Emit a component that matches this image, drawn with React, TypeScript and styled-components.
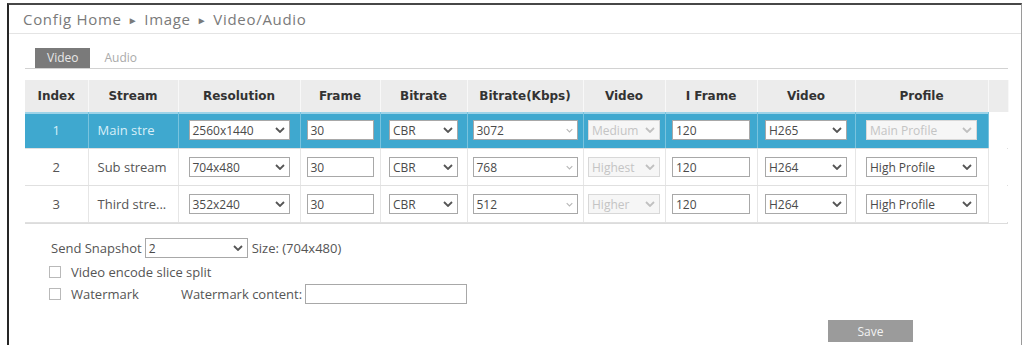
import styled, { createGlobalStyle } from "styled-components";

const GlobalStyle = createGlobalStyle`
  html, body {
    margin: 0;
    padding: 0;
    background: #fff;
  }
  body {
    font-family: "Open Sans", "Noto Sans", sans-serif;
    font-size: 13px;
    color: #555;
    overflow: hidden;
  }
`;

const Frame = styled.div`
  margin: 3px 0 0 7px;
  width: 1015px;
  height: 342px;
  overflow: hidden;
  box-sizing: border-box;
  border-top: 2px solid #474747;
  border-left: 2px solid #262626;
  border-right: 1px solid #9a9a9a;
`;

const Breadcrumb = styled.div`
  height: 28px;
  line-height: 28px;
  padding-left: 14px;
  border-bottom: 1px solid #e4e4e4;
  font-size: 15px;
  color: #7a7a7a;
  letter-spacing: 0.7px;
`;

const Arrow = styled.span`
  font-size: 10px;
  margin: 0 6px;
  position: relative;
  top: -1px;
`;

const Content = styled.div`
  padding: 0 13px 0 16px;
`;

const Tabs = styled.div`
  display: flex;
  align-items: flex-end;
  margin-top: 14px;
  height: 20px;
  border-bottom: 1px solid #d2d2d2;
`;

const Tab = styled.div<{ $active?: boolean }>`
  height: 20px;
  line-height: 20px;
  padding: 0 12px;
  margin-left: ${(p) => (p.$active ? "10px" : "2px")};
  font-size: 12px;
  background: ${(p) => (p.$active ? "#7a7a7a" : "transparent")};
  color: ${(p) => (p.$active ? "#e8e8e8" : "#aaa")};
`;

const TableWrap = styled.div`
  margin-top: 11px;
  border-right: 1px solid #dedede;
  border-bottom: 1px solid #dcdcdc;
`;

const Table = styled.table`
  width: 100%;
  table-layout: fixed;
  border-collapse: collapse;
`;

const Th = styled.th`
  height: 32px;
  padding: 0;
  background: #ececec;
  border-right: 1px solid #f8f8f8;
  font-family: "DejaVu Sans", "Liberation Sans", sans-serif;
  font-size: 12px;
  font-weight: bold;
  color: #333;
  text-align: center;
`;

const Row = styled.tr<{ $selected?: boolean }>`
  background: ${(p) => (p.$selected ? "#3fa8cf" : "#fff")};
  color: ${(p) => (p.$selected ? "#d8eff8" : "#555")};
  box-shadow: ${(p) => (p.$selected ? "inset 0 2px 0 #9dd3e8" : "none")};
`;

const Td = styled.td<{ $selected?: boolean; $left?: boolean; $gutter?: boolean }>`
  height: 36px;
  padding: ${(p) => (p.$left ? "0 0 0 9px" : "0")};
  text-align: ${(p) => (p.$left ? "left" : "center")};
  white-space: nowrap;
  overflow: hidden;
  border-right: 1px solid ${(p) => (p.$gutter ? "transparent" : p.$selected ? "#79c3de" : "#e6e6e6")};
  border-bottom: 1px solid ${(p) => (p.$gutter ? "transparent" : "#e0e0e0")};
  background: ${(p) => (p.$gutter ? "#fff" : "transparent")};
  font-size: 13px;
`;

const Field = styled.div<{ $w: number; $disabled?: boolean }>`
  display: inline-flex;
  align-items: center;
  justify-content: space-between;
  box-sizing: border-box;
  width: ${(p) => p.$w}px;
  height: 20px;
  padding: 0 4px 0 3px;
  vertical-align: middle;
  background: ${(p) => (p.$disabled ? "#f6f6f6" : "#fff")};
  border: 1px solid ${(p) => (p.$disabled ? "#d8d8d8" : "#a8a8a8")};
  color: ${(p) => (p.$disabled ? "#c4c4c4" : "#4a4a4a")};
  font-size: 12px;
  text-align: left;
  overflow: hidden;
  white-space: nowrap;
`;

const Chevron = ({ color = "#555", small = false }: { color?: string; small?: boolean }) => (
  <svg width={small ? 7 : 10} height={small ? 5 : 6} viewBox="0 0 10 6" style={{ flexShrink: 0 }}>
    <path d="M1 1 L5 5 L9 1" fill="none" stroke={color} strokeWidth={small ? 1.6 : 1.8} />
  </svg>
);

type SelectProps = { w: number; value: string; disabled?: boolean; combo?: boolean };

const Select = ({ w, value, disabled, combo }: SelectProps) => (
  <Field $w={w} $disabled={disabled}>
    <span>{value}</span>
    {combo ? (
      <Chevron color="#b8b8b8" small />
    ) : (
      <Chevron color={disabled ? "#c0c0c0" : "#555"} />
    )}
  </Field>
);

const TextInput = ({ w, value }: { w: number; value: string }) => (
  <Field $w={w}>
    <span>{value}</span>
  </Field>
);

const Options = styled.div`
  padding: 14px 0 0 24px;
`;

const OptionRow = styled.div<{ $mt?: number }>`
  display: flex;
  align-items: center;
  height: 20px;
  margin-top: ${(p) => p.$mt ?? 0}px;
  font-size: 13px;
  color: #555;
`;

const Label = styled.span<{ $ml?: number; $mr?: number }>`
  margin-left: ${(p) => p.$ml ?? 0}px;
  margin-right: ${(p) => p.$mr ?? 0}px;
`;

const Check = styled.span`
  width: 10px;
  height: 10px;
  border: 1px solid #b9b9b9;
  background: #fff;
  margin-right: 10px;
`;

const SaveBar = styled.div`
  display: flex;
  justify-content: flex-end;
  padding-right: 95px;
  margin-top: 16px;
`;

const SaveButton = styled.button`
  width: 85px;
  height: 22px;
  border: none;
  background: #9b9b9b;
  color: #f2f2f2;
  font-family: "Open Sans", sans-serif;
  font-size: 12px;
  padding: 0;
`;

const columns = [63, 90, 122, 80, 87, 116, 82, 92, 98, 133, 20];
const headers = [
  "Index",
  "Stream",
  "Resolution",
  "Frame",
  "Bitrate",
  "Bitrate(Kbps)",
  "Video",
  "I Frame",
  "Video",
  "Profile",
  "",
];

const streams = [
  { idx: "1", name: "Main stre", res: "2560x1440", kbps: "3072", quality: "Medium", codec: "H265", profile: "Main Profile", profileOff: true },
  { idx: "2", name: "Sub stream", res: "704x480", kbps: "768", quality: "Highest", codec: "H264", profile: "High Profile", profileOff: false },
  { idx: "3", name: "Third stre...", res: "352x240", kbps: "512", quality: "Higher", codec: "H264", profile: "High Profile", profileOff: false },
];

export default function App() {
  return (
    <>
      <GlobalStyle />
      <Frame>
        <Breadcrumb>
          Config Home<Arrow>►</Arrow>Image<Arrow>►</Arrow>Video/Audio
        </Breadcrumb>
        <Content>
          <Tabs>
            <Tab $active>Video</Tab>
            <Tab>Audio</Tab>
          </Tabs>

          <TableWrap>
            <Table>
              <colgroup>
                {columns.map((w, i) => (
                  <col key={i} style={{ width: w }} />
                ))}
              </colgroup>
              <thead>
                <tr>
                  {headers.map((h, i) => (
                    <Th key={i}>{h}</Th>
                  ))}
                </tr>
              </thead>
              <tbody>
                {streams.map((s, i) => {
                  const sel = i === 0;
                  return (
                    <Row key={s.idx} $selected={sel}>
                      <Td $selected={sel}>{s.idx}</Td>
                      <Td $selected={sel} $left>{s.name}</Td>
                      <Td $selected={sel}>
                        <Select w={101} value={s.res} />
                      </Td>
                      <Td $selected={sel}>
                        <TextInput w={67} value="30" />
                      </Td>
                      <Td $selected={sel}>
                        <Select w={69} value="CBR" />
                      </Td>
                      <Td $selected={sel}>
                        <Select w={105} value={s.kbps} combo />
                      </Td>
                      <Td $selected={sel}>
                        <Select w={72} value={s.quality} disabled />
                      </Td>
                      <Td $selected={sel}>
                        <TextInput w={78} value="120" />
                      </Td>
                      <Td $selected={sel}>
                        <Select w={82} value={s.codec} />
                      </Td>
                      <Td $selected={sel}>
                        <Select w={111} value={s.profile} disabled={s.profileOff} />
                      </Td>
                      <Td $gutter />
                    </Row>
                  );
                })}
              </tbody>
            </Table>
          </TableWrap>

          <Options>
            <OptionRow>
              <Label $ml={2} $mr={3}>Send Snapshot</Label>
              <Select w={103} value="2" />
              <Label $ml={4}>Size: (704x480)</Label>
            </OptionRow>
            <OptionRow $mt={4}>
              <Check />
              <Label>Video encode slice split</Label>
            </OptionRow>
            <OptionRow $mt={2}>
              <Check />
              <Label $mr={42}>Watermark</Label>
              <Label $mr={3}>Watermark content:</Label>
              <TextInput w={162} value="" />
            </OptionRow>
          </Options>

          <SaveBar>
            <SaveButton>Save</SaveButton>
          </SaveBar>
        </Content>
      </Frame>
    </>
  );
}
